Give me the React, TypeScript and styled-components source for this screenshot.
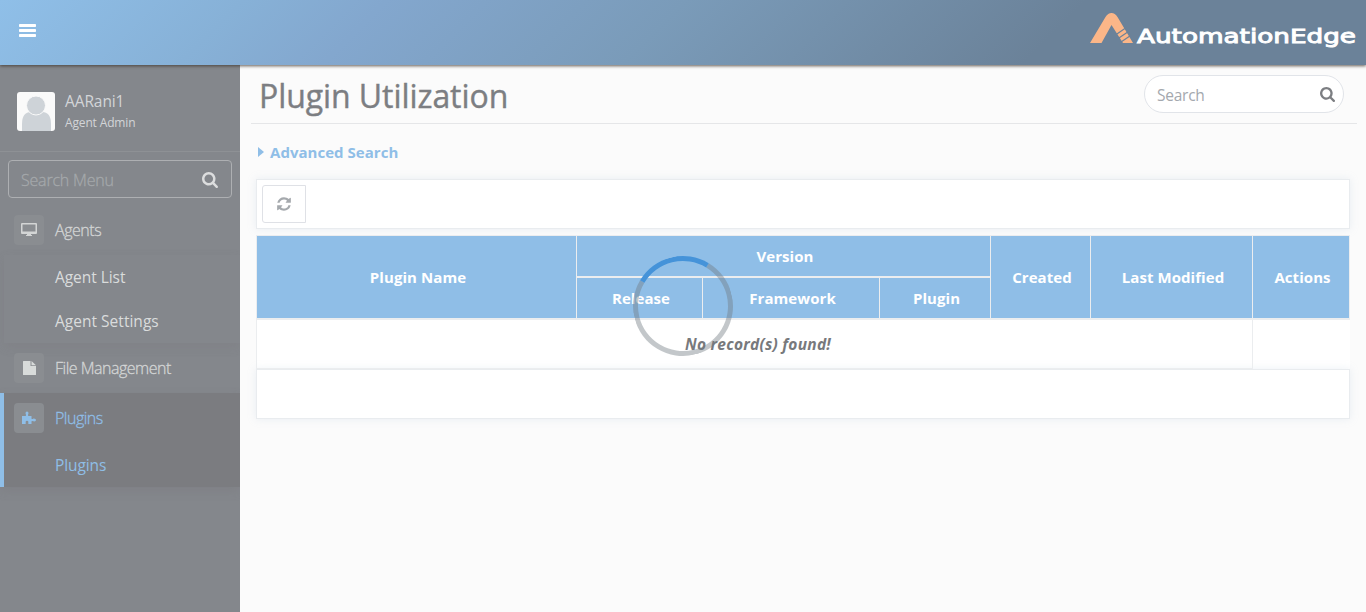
import React from "react";
import styled, { createGlobalStyle } from "styled-components";

const Global = createGlobalStyle`
  *{box-sizing:border-box}
  body{margin:0;background:#fbfbfb;font-family:"Open Sans","Noto Sans",sans-serif;font-size:16px;color:#7c7e82;overflow:hidden}
`;
const Page = styled.div`height:612px;display:flex;flex-direction:column;`;
const Header = styled.header`
  height:65px;flex:none;display:flex;align-items:center;justify-content:space-between;padding:0 10px 0 19px;
  background:linear-gradient(135deg,#8fbfe8 0%,#87b1d7 17%,#83a7ce 27%,#7a9bb9 48%,#6b8299 76%,#6b8299 100%);
  box-shadow:0 1px 3px rgba(60,50,40,.8);z-index:2;position:relative;
`;
const MenuButton = styled.button`border:0;padding:0 0 6px;background:none;display:flex;`;
const Body = styled.div`flex:1;display:flex;min-height:0;`;
const Sidebar = styled.aside`width:240px;flex:none;background:#84878c;color:#d3d5d8;overflow:hidden;`;
const Profile = styled.div`height:87px;display:flex;align-items:center;padding:6px 0 0 17px;gap:10px;border-bottom:1px solid #8e9195;`;
const Names = styled.div`display:flex;flex-direction:column;padding-top:1px;`;
const Line = styled.span<{ $size: number; $ls: number; $lh: number; $weight?: number }>`
  font-size:${p => p.$size}px;letter-spacing:${p => p.$ls}px;line-height:${p => p.$lh}px;font-weight:${p => p.$weight ?? 400};white-space:nowrap;
  ${p => (p.$weight === 300 ? "-webkit-text-stroke:.3px currentColor;" : "")}
`;
const MenuSearch = styled.div`
  margin:8px 8px 0;height:38px;border:1px solid #adafb2;border-radius:4px;display:flex;align-items:center;justify-content:space-between;
  padding:2px 13px 0 12px;color:#a4a8ab;
`;
const MenuRow = styled.div<{ $h: number; $top?: number; $active?: boolean }>`
  height:${p => p.$h}px;display:flex;align-items:center;gap:11px;padding-left:${p => (p.$active ? 10 : 14)}px;
  padding-top:${p => p.$top ?? 0}px;color:${p => (p.$active ? "#8fbee7" : "#d3d5d5")};
`;
const IconBox = styled.span`width:30px;height:30px;border-radius:4px;background:#8a8d91;display:grid;place-items:center;`;
const SubMenu = styled.div`margin-left:4px;padding-left:51px;height:88px;box-shadow:0 4px 10px rgba(110,105,110,.16);`;
const SubItem = styled.div<{ $active?: boolean }>`
  height:44px;display:flex;align-items:center;color:${p => (p.$active ? "#8fbee7" : "#dadcdc")};padding-left:${p => (p.$active ? 51 : 0)}px;
`;
const ActiveGroup = styled.div`height:94px;border-left:4px solid #8fbee7;background:#7b7c80;box-shadow:0 4px 10px rgba(110,105,110,.2);`;
const Main = styled.main`flex:1;display:flex;flex-direction:column;padding:0 9px 0 11px;`;
const TitleBar = styled.div`height:59px;display:flex;justify-content:space-between;padding:10px 13px 0 8px;border-bottom:1px solid #e5e6e8;`;
const Title = styled.h1`margin:0;font-size:32px;line-height:42px;font-weight:400;letter-spacing:-.07px;color:#7c7e82;-webkit-text-stroke:.4px currentColor;`;
const SearchBox = styled.div`
  width:200px;height:38px;border:1px solid #e1e4e9;border-radius:19px;background:#fff;display:flex;align-items:center;justify-content:space-between;
  padding:0 8px 0 12px;color:#a4a8ae;
  span{padding-top:2px}
`;
const Advanced = styled.div`height:55px;display:flex;align-items:center;gap:6px;padding:0 0 0 7px;color:#8fbee7;`;
const Content = styled.div`padding:0 7px 0 5px;`;
const Panel = styled.div`height:50px;background:#fff;border:1px solid #e9ecef;box-shadow:0 0 8px rgba(180,200,220,.25);padding:5px;`;
const Refresh = styled.button`
  width:44px;height:38px;border:1px solid #dfe1e6;border-radius:3px 0 0 3px;background:#fff;display:grid;place-items:center;padding:0;
`;
const Table = styled.div`
  margin-top:6px;display:grid;grid-template-columns:319px 125px 176px 110px 99px 161px 96px;grid-template-rows:40px 41px;
  gap:1px;background:#ebedef;border:1px solid #ebedef;border-bottom-width:2px;
`;
const Th = styled.div<{ $col: string; $row: string; $top?: boolean }>`
  grid-column:${p => p.$col};grid-row:${p => p.$row};background:#8fbee7;color:#fff;display:flex;align-items:center;justify-content:center;
  border-top:${p => (p.$top ? "1px solid #ebedef" : "0")};padding-left:3px;
`;
const EmptyRow = styled.div`height:49px;display:flex;background:#fff;`;
const EmptyCell = styled.div`
  width:997px;border:1px solid #ebedef;border-top:0;color:#77797c;font-style:italic;display:flex;align-items:center;justify-content:center;padding-left:7px;
`;
const Spinner = styled.div`
  position:absolute;left:633px;top:256px;width:100px;height:100px;border-radius:50%;border:5px solid rgba(112,122,130,.42);
  border-top-color:#4593d9;transform:rotate(-14deg);z-index:3;
`;

const SearchIcon = ({ color, size = 16 }: { color: string; size?: number }) => (
  <svg width={size} height={size} viewBox="64 128 1664 1664" fill={color}><path d="M1216 832q0-185-131.5-316.5t-316.5-131.5-316.5 131.5-131.5 316.5 131.5 316.5 316.5 131.5 316.5-131.5 131.5-316.5zm512 832q0 52-38 90t-90 38q-54 0-90-38l-343-342q-179 124-399 124-143 0-273.5-55.5t-225-150-150-225-55.5-273.5 55.5-273.5 150-225 225-150 273.5-55.5 273.5 55.5 225 150 150 225 55.5 273.5q0 220-124 399l343 343q37 37 37 90z" /></svg>
);
const RefreshIcon = () => (
  <svg width="16" height="16" viewBox="0 0 1792 1792" fill="#a5a9ad"><path d="M1639 1056q0 5-1 7-64 268-268 434.5t-478 166.5q-146 0-282.5-55t-243.5-157l-129 129q-19 19-45 19t-45-19-19-45v-448q0-26 19-45t45-19h448q26 0 45 19t19 45-19 45l-137 137q71 66 161 102t187 36q134 0 250-65t186-179q11-17 53-117 8-23 30-23h192q13 0 22.5 9.5t9.5 22.5zm25-800v448q0 26-19 45t-45 19h-448q-26 0-45-19t-19-45 19-45l138-138q-148-137-349-137-134 0-250 65t-186 179q-11 17-53 117-8 23-30 23h-199q-13 0-22.5-9.5t-9.5-22.5v-7q65-268 270-434.5t480-166.5q146 0 284 55.5t245 156.5l130-129q19-19 45-19t45 19 19 45z" /></svg>
);
const Logo = () => (
  <svg width="268" height="65" viewBox="1088 0 268 65">
    <path d="M1090 43 1105.500 17Q1108 13 1111.500 13T1117.500 17L1133 43H1123L1111.500 25 1101.500 43Z" fill="#fbb688" />
    <path d="M1116.500 34.300 1126 27.800M1118.500 38.300 1128.500 31.500M1121 42 1131 35.300" stroke="#6b8299" strokeWidth="1.200" />
    <text x="1137" y="43" fill="#fff" stroke="#fff" strokeWidth=".9" fontFamily="DejaVu Sans" fontSize="19.500" textLength="219" lengthAdjust="spacingAndGlyphs">AutomationEdge</text>
  </svg>
);

const Head = ({ children }: { children: string }) => <Line $size={15} $ls={0.07} $lh={24} $weight={700}>{children}</Line>;

export default function App() {
  return (
    <Page>
      <Global />
      <Header>
        <MenuButton aria-label="Toggle menu">
          <svg width="17" height="14" viewBox="0 0 17 14" fill="#fff"><rect y="1" width="17" height="3" rx=".7" /><rect y="6" width="17" height="3" rx=".7" /><rect y="11" width="17" height="3" rx=".7" /></svg>
        </MenuButton>
        <Logo />
      </Header>
      <Body>
        <Sidebar>
          <Profile>
            <svg width="38" height="39" viewBox="0 0 38 39">
              <rect width="38" height="39" rx="3" fill="#fafafa" />
              <path d="M5 39V32Q5 20 14 20H25Q34 20 34 32V39Z" fill="#ced3d8" />
              <circle cx="19" cy="13.500" r="9.500" fill="#ced3d8" stroke="#fafafa" />
            </svg>
            <Names><Line $size={15.5} $ls={-0.1} $lh={21}>AARani1</Line><Line $size={12} $ls={-0.15} $lh={21}>Agent Admin</Line></Names>
          </Profile>
          <MenuSearch><Line $size={16} $ls={-0.2} $lh={24} $weight={300}>Search Menu</Line><SearchIcon color="#dcddde" /></MenuSearch>
          <MenuRow $h={57} $top={7}>
            <IconBox><svg width="16" height="14" viewBox="0 0 16 14" fill="#d3d5d5"><path fillRule="evenodd" d="M1 0H15Q16 0 16 1V10Q16 11 15 11H10V12H11V13H5V12H6V11H1Q0 11 0 10V1Q0 0 1 0ZM1.500 1.500V8.500H14.500V1.500Z" /></svg></IconBox>
            <Line $size={16} $ls={-0.45} $lh={24} $weight={300}>Agents</Line>
          </MenuRow>
          <SubMenu>
            <SubItem><Line $size={15.5} $ls={-0.05} $lh={24}>Agent List</Line></SubItem>
            <SubItem><Line $size={15.5} $ls={0.02} $lh={24}>Agent Settings</Line></SubItem>
          </SubMenu>
          <MenuRow $h={50}>
            <IconBox><svg width="13" height="14" viewBox="0 0 13 14" fill="#d8dbda"><path d="M.5 0H7.500V5H13V13.500Q13 14 12.500 14H.5Q0 14 0 13.500V.5Q0 0 .5 0ZM8.500 0 13 4.200H8.500Z" /></svg></IconBox>
            <Line $size={16} $ls={-0.5} $lh={24} $weight={300}>File Management</Line>
          </MenuRow>
          <ActiveGroup>
            <MenuRow $h={50} $active>
              <IconBox><svg width="14" height="14" viewBox="0 0 14 14" fill="#8fbee7"><path d="M0 5H3.800Q4.300 3.800 3.500 2.300 3.500 .5 5 .5T6.500 2.300Q5.700 3.800 6.200 5H9.500V7.800Q10.300 8.500 11.500 7.500 14 7.300 14 9T11.500 10.300Q10.300 9.500 9.500 10.300V13H6.500Q5.800 12 6.500 11 6 9.800 5 9.800T3.500 11Q4.200 12 3.500 13H0Z" /></svg></IconBox>
              <Line $size={16} $ls={-0.5} $lh={24} $weight={300}>Plugins</Line>
            </MenuRow>
            <SubItem $active><Line $size={15.5} $ls={-0.1} $lh={24}>Plugins</Line></SubItem>
          </ActiveGroup>
        </Sidebar>
        <Main>
          <TitleBar>
            <Title>Plugin Utilization</Title>
            <SearchBox><Line $size={15.5} $ls={-0.25} $lh={24}>Search</Line><SearchIcon color="#7c7e82" size={15} /></SearchBox>
          </TitleBar>
          <Advanced>
            <svg width="6" height="10" viewBox="0 0 6 10" fill="#8fbee7"><path d="M0 0 6 5 0 10Z" /></svg>
            <Line $size={15} $ls={0.03} $lh={24} $weight={700}>Advanced Search</Line>
          </Advanced>
          <Content>
            <Panel><Refresh aria-label="Refresh"><RefreshIcon /></Refresh></Panel>
            <Table>
              <Th $col="1" $row="1 / 3"><Head>Plugin Name</Head></Th>
              <Th $col="2 / 5" $row="1"><Head>Version</Head></Th>
              <Th $col="2" $row="2" $top><Head>Release</Head></Th>
              <Th $col="3" $row="2" $top><Head>Framework</Head></Th>
              <Th $col="4" $row="2" $top><Head>Plugin</Head></Th>
              <Th $col="5" $row="1 / 3"><Head>Created</Head></Th>
              <Th $col="6" $row="1 / 3"><Head>Last Modified</Head></Th>
              <Th $col="7" $row="1 / 3"><Head>Actions</Head></Th>
            </Table>
            <EmptyRow><EmptyCell><Line $size={15.5} $ls={0.25} $lh={24} $weight={700}>No record(s) found!</Line></EmptyCell></EmptyRow>
            <Panel />
          </Content>
        </Main>
      </Body>
      <Spinner />
    </Page>
  );
}
